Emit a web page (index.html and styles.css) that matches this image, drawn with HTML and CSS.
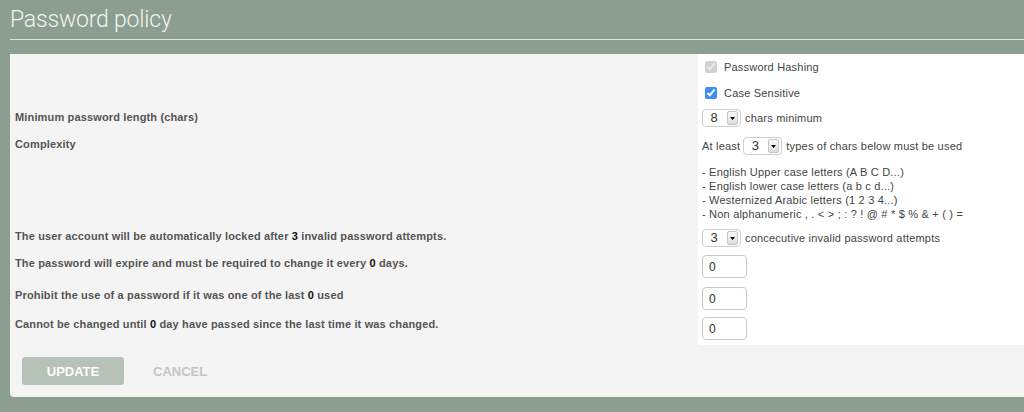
FILE: index.html
```html
<!DOCTYPE html>
<html lang="en">
<head>
    <meta charset="UTF-8">
    <title>Password policy</title>
    <link rel="stylesheet" href="styles.css">
</head>
<body>
    <h1 class="page-title">Password policy</h1>

    <div class="panel">
        <div class="policy">
            <div class="row row-hash">
                <div class="label"></div>
                <div class="ctrl">
                    <label class="check"><input type="checkbox" checked disabled> Password Hashing</label>
                </div>
            </div>
            <div class="row row-case">
                <div class="label"></div>
                <div class="ctrl">
                    <label class="check"><input type="checkbox" checked> Case Sensitive</label>
                </div>
            </div>
            <div class="row row-length">
                <div class="label">Minimum password length (chars)</div>
                <div class="ctrl">
                    <span class="select"><span class="value">8</span><span class="arrow"><svg width="5" height="3" viewBox="0 0 5 3"><path d="M0 0h5L2.5 3z"/></svg></span></span>
                    <span class="after">chars minimum</span>
                </div>
            </div>
            <div class="row row-complex">
                <div class="label">Complexity</div>
                <div class="ctrl">
                    <div class="inline">
                        <span class="before">At least</span>
                        <span class="select"><span class="value">3</span><span class="arrow"><svg width="5" height="3" viewBox="0 0 5 3"><path d="M0 0h5L2.5 3z"/></svg></span></span>
                        <span class="after">types of chars below must be used</span>
                    </div>
                    <ul class="char-types">
                        <li>- English Upper case letters (A B C D...)</li>
                        <li>- English lower case letters (a b c d...)</li>
                        <li>- Westernized Arabic letters (1 2 3 4...)</li>
                        <li>- Non alphanumeric , . &lt; &gt; ; : ? ! @ # * $ % &amp; + ( ) =</li>
                    </ul>
                </div>
            </div>
            <div class="row row-lock">
                <div class="label">The user account will be automatically locked after <b>3</b> invalid password attempts.</div>
                <div class="ctrl">
                    <span class="select"><span class="value">3</span><span class="arrow"><svg width="5" height="3" viewBox="0 0 5 3"><path d="M0 0h5L2.5 3z"/></svg></span></span>
                    <span class="after">concecutive invalid password attempts</span>
                </div>
            </div>
            <div class="row row-expire">
                <div class="label">The password will expire and must be required to change it every <b>0</b> days.</div>
                <div class="ctrl"><input class="num" type="text" value="0"></div>
            </div>
            <div class="row row-history">
                <div class="label">Prohibit the use of a password if it was one of the last <b>0</b> used</div>
                <div class="ctrl"><input class="num" type="text" value="0"></div>
            </div>
            <div class="row row-min-age">
                <div class="label">Cannot be changed until <b>0</b> day have passed since the last time it was changed.</div>
                <div class="ctrl"><input class="num" type="text" value="0"></div>
            </div>
        </div>

        <div class="actions">
            <button class="btn update">UPDATE</button>
            <button class="btn cancel">CANCEL</button>
        </div>
    </div>
</body>
</html>
```

FILE: styles.css
```css
body {
    margin: 0;
    background: #8b9e8f;
    font-family: "Liberation Sans", Arial, sans-serif;
    height: 412px;
    overflow: hidden;
}

.page-title {
    margin: 0 0 0 10px;
    padding: 6px 0 5px 0;
    height: 28px;
    font-family: Roboto, "Liberation Sans", sans-serif;
    font-weight: 300;
    font-size: 23px;
    line-height: 28px;
    color: #f1f3f1;
    border-bottom: 1px solid #dce3dd;
    letter-spacing: -0.2px;
}

.panel {
    margin: 14px 0 0 10px;
    background: #f4f4f4;
    border-bottom-left-radius: 4px;
}

/* two columns: labels on the left, white controls column on the right */
.row {
    display: grid;
    grid-template-columns: 1fr 326px;
}

.label {
    padding-left: 5px;
    font-size: 11px;
    line-height: 14px;
    font-weight: bold;
    color: #555;
    letter-spacing: 0.15px;
}

.label b {
    color: #111;
}

.ctrl {
    background: #fff;
    padding-left: 4px;
    font-size: 11px;
    line-height: 14px;
    color: #444;
    letter-spacing: 0.2px;
    display: flex;
    align-items: center;
    flex-wrap: wrap;
}

.row-hash .ctrl { height: 26px; }
.row-case .ctrl { height: 25px; padding-top: 1px; box-sizing: border-box; }

.row-length .label { padding-top: 5px; }
.row-length .ctrl { padding: 4px 0 6px 4px; }

.row-complex .label { padding-top: 4px; }
.row-complex .ctrl { padding: 4px 0 1px 4px; display: block; }

.row-lock .label { padding-top: 7px; }
.row-lock .ctrl { padding: 7px 0 5px 4px; }

.row-expire .label { padding-top: 4px; }
.row-expire .ctrl { padding: 3px 0 4px 4px; }

.row-history .label { padding-top: 6px; }
.row-history .ctrl { padding: 5px 0 3px 4px; }

.row-min-age .label { padding-top: 4px; }
.row-min-age .ctrl { padding: 4px 0 5px 4px; }

.check {
    display: flex;
    align-items: center;
    padding-left: 3px;
}

.check input {
    margin: 0 7px 0 0;
    width: 12px;
    height: 12px;
    accent-color: #3a8ef7;
}

.inline {
    display: flex;
    align-items: center;
}

.before {
    margin-right: 3px;
}

.after {
    margin-left: 4px;
}

/* small dropdown box */
.select {
    display: inline-flex;
    align-items: center;
    justify-content: space-between;
    box-sizing: border-box;
    width: 39px;
    height: 18px;
    padding: 0 2px 0 0;
    border: 1px solid #cfcfcf;
    border-radius: 4px;
    background: #fff;
    font-size: 13px;
    color: #333;
    letter-spacing: 0;
}

.select .value {
    flex: 1;
    text-align: center;
    padding-right: 2px;
}

.select .arrow {
    display: flex;
    align-items: center;
    justify-content: center;
    width: 9px;
    height: 12px;
    border: 1px solid #c4c4c4;
    border-radius: 2px;
    background: linear-gradient(#fafafa, #dedede);
}

.char-types {
    list-style: none;
    margin: 10px 0 0 0;
    padding: 0;
}

.num {
    box-sizing: border-box;
    width: 45px;
    height: 23px;
    margin: 0;
    padding: 0 6px;
    border: 1px solid #c8c8c8;
    border-radius: 4px;
    font-family: "Liberation Sans", Arial, sans-serif;
    font-size: 12px;
    color: #333;
    background: #fff;
}

.actions {
    display: flex;
    align-items: center;
    padding: 12px 0 12px 12px;
}

.btn {
    height: 28px;
    border: none;
    border-radius: 3px;
    font-family: "Liberation Sans", Arial, sans-serif;
    font-size: 13px;
    font-weight: bold;
    cursor: pointer;
}

.update {
    width: 102px;
    background: #b6c2b7;
    color: #fff;
}

.cancel {
    margin-left: 5px;
    padding: 0 24px;
    background: none;
    color: #c3c7c3;
}
```
